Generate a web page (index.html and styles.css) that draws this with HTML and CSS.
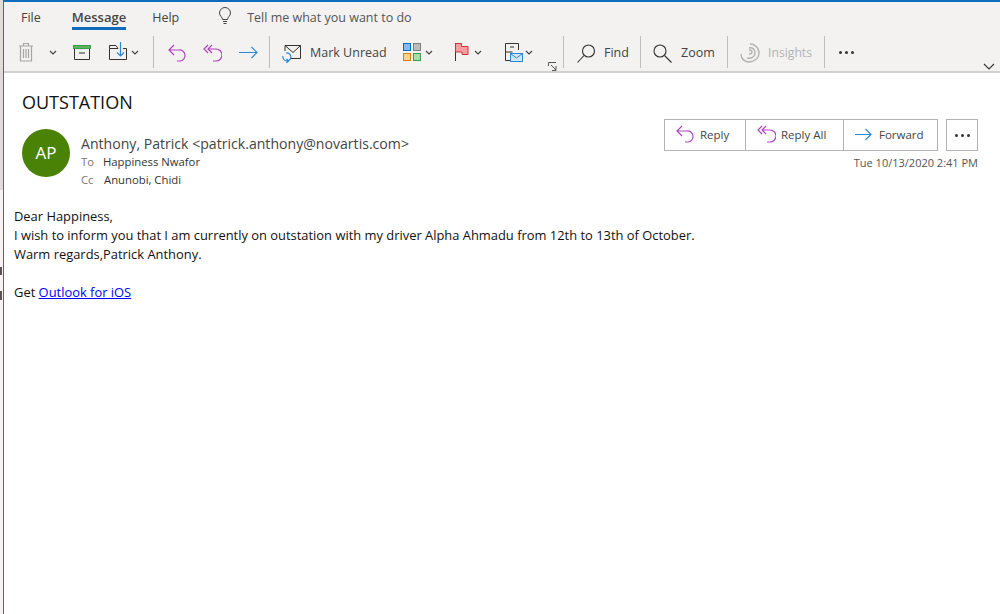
FILE: index.html
```html
<!doctype html>
<html lang="en">
  <head>
    <meta charset="UTF-8" />
    <title>OUTSTATION - Message</title>
    <link rel="stylesheet" href="styles.css">
  </head>
  <body>
    <div class="behind">
      <i class="behind-o"></i>
      <i class="behind-y"></i>
    </div>
    <div class="window">
      <div class="ribbon">
        <div class="tabs">
          <span class="tab tab-file">File</span>
          <span class="tab tab-active">Message</span>
          <span class="tab">Help</span>
          <svg class="bulb" width="14" height="18" viewBox="0 0 14 18" fill="none" stroke="#444" stroke-width="1">
            <path d="M4.500 12.500C4.500 10 1.500 9 1.500 6a5.500 5.500 0 0 1 11 0c0 3-3 4-3 6.500z" />
            <path d="M5 14.500h4M5.500 16.500h3" />
          </svg>
          <span class="tell">Tell me what you want to do</span>
        </div>
        <div class="tools">
          <svg class="ic-trash" width="16" height="20" viewBox="0 0 16 20" fill="none" stroke="#a6a6a6" stroke-width="1.200">
            <path d="M1 4h14M5.500 4V1.500h5V4M2.500 4v15h11V4M5.500 7v9M8 7v9M10.500 7v9" />
          </svg>
          <svg class="caret caret-trash" width="8" height="5" viewBox="0 0 8 5" fill="none" stroke="#444" stroke-width="1.200"><path d="M1 1l3 3 3-3" /></svg>
          <svg class="ic-archive" width="18" height="15" viewBox="0 0 18 15" fill="none">
            <rect x="0.500" y="0.500" width="17" height="3" fill="#5fb55f" stroke="#3f9a4a" />
            <path d="M1.500 4v10.500h15V4M6 8h6" stroke="#333" />
          </svg>
          <svg class="ic-move" width="18" height="18" viewBox="0 0 18 18" fill="none">
            <path d="M9 6.500H.5v11h17v-11H14M.5 6.500v-3H7l2 3" stroke="#333" />
            <path d="M11.500 0v14M8 10.500l3.500 3.500 3.500-3.500" stroke="#2b88d8" stroke-width="1.200" />
          </svg>
          <svg class="caret caret-move" width="8" height="5" viewBox="0 0 8 5" fill="none" stroke="#444" stroke-width="1.200"><path d="M1 1l3 3 3-3" /></svg>
          <i class="sep sep-a"></i>
          <svg class="ic-reply" width="18" height="18" viewBox="0 0 18 18" fill="none" stroke="#b146c2" stroke-width="1.200">
            <path d="M6 1L1 6l5 5M1 6h10a5.500 5.500 0 0 1 1 11H9" />
          </svg>
          <svg class="ic-replyall" width="19" height="18" viewBox="0 0 19 18" fill="none" stroke="#b146c2" stroke-width="1.200">
            <path d="M5 1L1 5l4 4M9 1L5 5l4 4M5 5h8a5.500 5.500 0 0 1 0 12h-3" />
          </svg>
          <svg class="ic-forward" width="19" height="13" viewBox="0 0 19 13" fill="none" stroke="#2b88d8" stroke-width="1.200">
            <path d="M0 6.500h18M12.500 1l5.500 5.500-5.500 5.500" />
          </svg>
          <i class="sep sep-b"></i>
          <svg class="ic-unread" width="20" height="19" viewBox="0 0 20 19" fill="none">
            <path d="M3 7V1.500h15.500v13H8M3 1.500l8 7 7.500-7" stroke="#333" />
            <path d="M1 12a4 4 0 1 0 3-3M4.500 15l2 2-2 2" stroke="#2b88d8" stroke-width="1.200" />
          </svg>
          <span class="label label-unread">Mark Unread</span>
          <svg class="ic-cats" width="18" height="18" viewBox="0 0 18 18">
            <rect x="0.500" y="0.500" width="7" height="7" fill="#83bdf0" stroke="#0f6cbd" />
            <rect x="10.500" y="0.500" width="7" height="7" fill="#bdbdbd" stroke="#7f7f7f" />
            <rect x="0.500" y="10.500" width="7" height="7" fill="#fcd58a" stroke="#d87d14" />
            <rect x="10.500" y="10.500" width="7" height="7" fill="#a8dca8" stroke="#3f9a4a" />
          </svg>
          <svg class="caret caret-cats" width="8" height="5" viewBox="0 0 8 5" fill="none" stroke="#444" stroke-width="1.200"><path d="M1 1l3 3 3-3" /></svg>
          <svg class="ic-flag" width="14" height="18" viewBox="0 0 14 18">
            <path d="M.5 0v18" stroke="#333" />
            <path d="M.5.500h6v3h6.500v8h-6V9H.5z" fill="#fb9ba2" stroke="#d13438" />
          </svg>
          <svg class="caret caret-flag" width="8" height="5" viewBox="0 0 8 5" fill="none" stroke="#444" stroke-width="1.200"><path d="M1 1l3 3 3-3" /></svg>
          <svg class="ic-rules" width="18" height="19" viewBox="0 0 18 19" fill="none">
            <path d="M5 17.500H.5V.500h13V7M.5 9h7M5 4h4" stroke="#333" />
            <rect x="5.500" y="10.500" width="12" height="8" fill="#cfe6f8" stroke="#2b88d8" />
            <path d="M6 11l5.500 4 5.500-4" stroke="#2b88d8" />
          </svg>
          <svg class="caret caret-rules" width="8" height="5" viewBox="0 0 8 5" fill="none" stroke="#444" stroke-width="1.200"><path d="M1 1l3 3 3-3" /></svg>
          <svg class="ic-launch" width="9" height="9" viewBox="0 0 9 9" fill="none" stroke="#555"><path d="M.5 4V.500H8M3 3l5 5M8 4v4.500H4" /></svg>
          <i class="sep sep-c"></i>
          <svg class="ic-find" width="19" height="19" viewBox="0 0 19 19" fill="none" stroke="#333" stroke-width="1.100"><circle cx="11.500" cy="7" r="6" /><path d="M7 11.500L.5 18.500" /></svg>
          <span class="label label-find">Find</span>
          <i class="sep sep-d"></i>
          <svg class="ic-zoom" width="19" height="19" viewBox="0 0 19 19" fill="none" stroke="#333" stroke-width="1.100"><circle cx="7" cy="7" r="6" /><path d="M11.500 11.500l7 7" /></svg>
          <span class="label label-zoom">Zoom</span>
          <i class="sep sep-e"></i>
          <svg class="ic-insights" width="20" height="20" viewBox="0 0 20 20" fill="none" stroke="#b3b3b3" stroke-width="1.400">
            <path d="M1 11c0 5 4 8 8 8s10-3 10-9-5-9-9-9" />
            <path d="M7 15c4 1 8-1 8-5s-3-6-6-5" />
            <path d="M9 11c2 0 3-1 3-2s-1-2-3-2" />
          </svg>
          <span class="label label-insights">Insights</span>
          <i class="sep sep-f"></i>
          <span class="dots dots-ribbon"><i></i><i></i><i></i></span>
          <svg class="ic-collapse" width="12" height="7" viewBox="0 0 12 7" fill="none" stroke="#333" stroke-width="1.100"><path d="M1 1l5 5 5-5" /></svg>
        </div>
      </div>

      <div class="message">
        <h1 class="subject">OUTSTATION</h1>
        <div class="head">
          <div class="avatar">AP</div>
          <div class="people">
            <div class="from">Anthony, Patrick &lt;patrick.anthony@novartis.com&gt;</div>
            <div class="line"><span class="key key-to">To</span>Happiness Nwafor</div>
            <div class="line"><span class="key key-cc">Cc</span>Anunobi, Chidi</div>
          </div>
          <div class="actions">
            <div class="action-row">
              <div class="buttons">
                <div class="button button-reply">
                  <svg width="18" height="18" viewBox="0 0 18 18" fill="none" stroke="#b146c2" stroke-width="1.200"><path d="M6 1L1 6l5 5M1 6h10a5.500 5.500 0 0 1 1 11H9" /></svg>
                  Reply
                </div>
                <div class="button button-replyall">
                  <svg width="19" height="18" viewBox="0 0 19 18" fill="none" stroke="#b146c2" stroke-width="1.200"><path d="M5 1L1 5l4 4M9 1L5 5l4 4M5 5h8a5.500 5.500 0 0 1 0 12h-3" /></svg>
                  Reply All
                </div>
                <div class="button button-forward">
                  <svg width="17" height="13" viewBox="0 0 17 13" fill="none" stroke="#2b88d8" stroke-width="1.200"><path d="M0 6.500h16M10.500 1l5.500 5.500-5.500 5.500" /></svg>
                  Forward
                </div>
              </div>
              <div class="more"><span class="dots"><i></i><i></i><i></i></span></div>
            </div>
            <div class="date">Tue 10/13/2020 2:41 PM</div>
          </div>
        </div>
        <div class="body">
          <div>Dear Happiness,</div>
          <div>I wish to inform you that I am currently on outstation with my driver Alpha Ahmadu from 12th to 13th of October.</div>
          <div>Warm regards,Patrick Anthony.</div>
          <div class="get">Get <a href="#">Outlook for iOS</a></div>
        </div>
      </div>
    </div>
  </body>
</html>
```

FILE: styles.css
```css
html,
body {
  width: 100%;
  height: 100%;
  overflow: hidden;
  padding: 0;
  margin: 0;
}

body {
  display: flex;
  background-color: #fff;
  font-family: "Open Sans", "Noto Sans", sans-serif;
  color: #444;
}

/* sliver of the window underneath, at the left edge */
.behind {
  flex: 0 0 3px;
  position: relative;
  overflow: hidden;
  background: linear-gradient(#dcdcdc 0, #dcdcdc 190px, #f4f4f4 190px);
}

.behind i {
  position: absolute;
  left: 0;
  width: 2px;
  background-color: #555;
}

.behind-o { top: 267px; height: 8px; }
.behind-y { top: 291px; height: 9px; }

.window {
  flex: 1;
  display: flex;
  flex-direction: column;
  border-top: 2px solid #0f6cbd;
  border-left: 1px solid #2a70b8;
  box-sizing: border-box;
}

.ribbon {
  flex: 0 0 71px;
  background-color: #f3f2f1;
  border-bottom: 2px solid #d2d0ce;
  box-sizing: border-box;
}

.tabs {
  height: 28px;
  display: flex;
  align-items: center;
  font-size: 12.500px;
}

.tab {
  margin-left: 26px;
  padding-top: 3px;
  line-height: 25px;
}

.tab-file {
  margin-left: 17px;
}

.tab-active {
  margin-left: 31px;
  font-size: 13px;
  font-weight: 600;
  position: relative;
  color: #444;
}

.tab-active::after {
  content: "";
  position: absolute;
  left: 0;
  right: 0;
  bottom: 0;
  height: 3px;
  background-color: #0f6cbd;
}

.bulb {
  margin-left: 39px;
  margin-right: 15px;
}

.tell {
  color: #555;
  padding-top: 3px;
}

/* the ribbon is a free strip of icons, each placed on it */
.tools {
  position: relative;
  height: 40px;
  margin-left: -1px;
  font-size: 12.500px;
}

.tools > * {
  position: absolute;
}

.label {
  top: 14px;
  line-height: 18px;
}

.sep {
  top: 6px;
  width: 1px;
  height: 32px;
  background-color: #bdbdbd;
}

.ic-trash { left: 15px; top: 12px; }
.caret-trash { left: 46px; top: 20px; }
.ic-archive { left: 70px; top: 15px; }
.ic-move { left: 106px; top: 12px; }
.caret-move { left: 128px; top: 20px; }
.sep-a { left: 150px; }
.ic-reply { left: 165px; top: 14px; }
.ic-replyall { left: 200px; top: 14px; }
.ic-forward { left: 236px; top: 16px; }
.sep-b { left: 266px; }
.ic-unread { left: 279px; top: 14px; }
.label-unread { left: 307px; }
.ic-cats { left: 400px; top: 13px; }
.caret-cats { left: 422px; top: 20px; }
.ic-flag { left: 452px; top: 13px; }
.caret-flag { left: 471px; top: 20px; }
.ic-rules { left: 502px; top: 13px; }
.caret-rules { left: 522px; top: 20px; }
.ic-launch { left: 545px; top: 32px; }
.sep-c { left: 560px; }
.ic-find { left: 574px; top: 14px; }
.label-find { left: 601px; }
.sep-d { left: 637px; }
.ic-zoom { left: 650px; top: 14px; }
.label-zoom { left: 678px; }
.sep-e { left: 724px; }
.ic-insights { left: 737px; top: 13px; }
.label-insights { left: 765px; width: 46px; color: #b3b3b3; font-size: 12.200px; }
.sep-f { left: 821px; }
.dots-ribbon { left: 836px; top: 21px; }
.ic-collapse { left: 980px; top: 33px; }

.dots {
  display: flex;
  gap: 3px;
}

.dots i {
  width: 3px;
  height: 3px;
  border-radius: 50%;
  background-color: #333;
}

.message {
  flex: 1;
  padding: 17px 22px 0 18px;
}

.subject {
  margin: 0;
  font-size: 18px;
  font-weight: 400;
  line-height: 24px;
  color: #111;
}

.head {
  display: flex;
  margin-top: 14px;
}

.avatar {
  width: 48px;
  height: 48px;
  border-radius: 50%;
  margin-top: 1px;
  background-color: #498205;
  color: #fff;
  font-size: 17px;
  line-height: 48px;
  text-align: center;
}

.people {
  margin-left: 11px;
  flex: 1;
}

.from {
  font-size: 14.100px;
  line-height: 19px;
  margin-top: 6px;
}

.line {
  font-size: 11.300px;
  line-height: 18px;
  color: #333;
}

.key {
  color: #777;
  display: inline-block;
}

.key-to { width: 22px; }
.key-cc { width: 23px; }

.actions {
  display: flex;
  flex-direction: column;
  align-items: flex-end;
  margin-top: -9px;
}

.action-row {
  display: flex;
  gap: 8px;
}

.buttons {
  display: flex;
  height: 32px;
  border: 1px solid #b3b3b3;
  box-sizing: border-box;
  background-color: #fff;
}

.button {
  display: flex;
  align-items: center;
  font-size: 11.500px;
  color: #444;
  box-sizing: border-box;
  padding-left: 11px;
  padding-bottom: 2px;
  gap: 6px;
}

.button + .button {
  border-left: 1px solid #b3b3b3;
}

.button-reply { width: 80px; }
.button-replyall { width: 98px; gap: 5px; }
.button-forward { width: 94px; gap: 7px; }

.more {
  width: 32px;
  height: 32px;
  border: 1px solid #b3b3b3;
  box-sizing: border-box;
  display: flex;
  align-items: center;
  justify-content: center;
}

.date {
  font-size: 11px;
  line-height: 16px;
  margin-top: 4px;
  color: #555;
}

.body {
  margin-top: 18px;
  margin-left: -8px;
  font-size: 12.920px;
  line-height: 19px;
  color: #111;
}

.get {
  margin-top: 19px;
}

.get a {
  color: #0000ff;
}
```
